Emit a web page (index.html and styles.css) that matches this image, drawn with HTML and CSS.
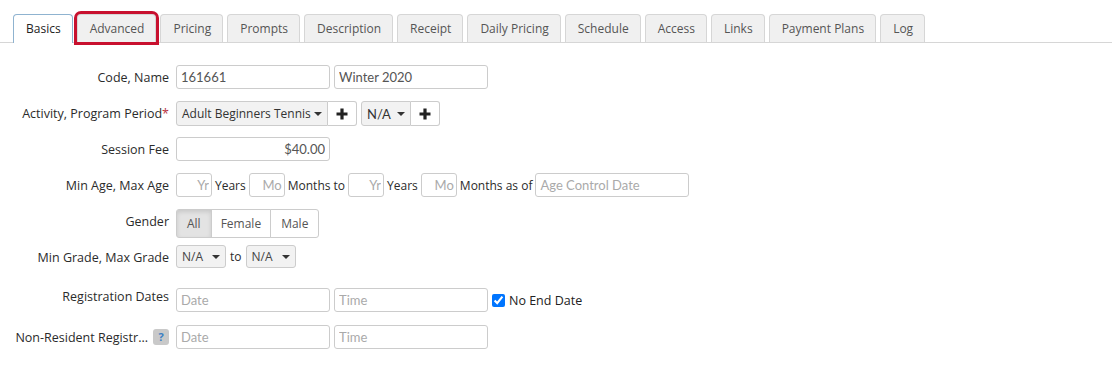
FILE: index.html
```html
<!DOCTYPE html>
<html lang="en">
<head>
    <meta charset="UTF-8">
    <meta name="viewport" content="width=device-width, initial-scale=1.0">
    <title>Session - Basics</title>
    <link rel="stylesheet" href="styles.css">
</head>
<body>
    <div class="tab-container">
        <div class="tab active">Basics</div>
        <div class="tab marked">Advanced</div>
        <div class="tab">Pricing</div>
        <div class="tab">Prompts</div>
        <div class="tab">Description</div>
        <div class="tab">Receipt</div>
        <div class="tab">Daily Pricing</div>
        <div class="tab">Schedule</div>
        <div class="tab">Access</div>
        <div class="tab">Links</div>
        <div class="tab">Payment Plans</div>
        <div class="tab">Log</div>
    </div>

    <div class="form">
        <div class="row">
            <label class="label">Code, Name</label>
            <div class="controls">
                <input type="text" class="field" value="161661">
                <input type="text" class="field" value="Winter 2020">
            </div>
        </div>
        <div class="row">
            <label class="label">Activity, Program Period<span class="req">*</span></label>
            <div class="controls">
                <div class="group">
                    <div class="pick activity">Adult Beginners Tennis <span class="caret"></span></div>
                    <div class="add"><svg width="14" height="14" viewBox="0 0 14 14"><path d="M7 1.5v11M1.5 7h11" stroke="#222" stroke-width="3.2"/></svg></div>
                </div>
                <div class="group">
                    <div class="pick period">N/A <span class="caret"></span></div>
                    <div class="add"><svg width="14" height="14" viewBox="0 0 14 14"><path d="M7 1.5v11M1.5 7h11" stroke="#222" stroke-width="3.2"/></svg></div>
                </div>
            </div>
        </div>
        <div class="row">
            <label class="label">Session Fee</label>
            <div class="controls">
                <input type="text" class="field money" value="$40.00">
            </div>
        </div>
        <div class="row">
            <label class="label">Min Age, Max Age</label>
            <div class="controls tight">
                <input type="text" class="field tiny" placeholder="Yr">
                <span class="word">Years</span>
                <input type="text" class="field tiny" placeholder="Mo">
                <span class="word">Months to</span>
                <input type="text" class="field tiny" placeholder="Yr">
                <span class="word">Years</span>
                <input type="text" class="field tiny" placeholder="Mo">
                <span class="word">Months as of</span>
                <input type="text" class="field" placeholder="Age Control Date">
            </div>
        </div>
        <div class="row">
            <label class="label">Gender</label>
            <div class="controls">
                <div class="btn-group">
                    <div class="btn on">All</div>
                    <div class="btn">Female</div>
                    <div class="btn">Male</div>
                </div>
            </div>
        </div>
        <div class="row">
            <label class="label">Min Grade, Max Grade</label>
            <div class="controls">
                <div class="pick grade">N/A <span class="caret"></span></div>
                <span class="word">to</span>
                <div class="pick grade">N/A <span class="caret"></span></div>
            </div>
        </div>
        <div class="row dates">
            <label class="label top">Registration Dates</label>
            <div class="controls">
                <input type="text" class="field" placeholder="Date">
                <input type="text" class="field" placeholder="Time">
                <label class="check"><input type="checkbox" checked> No End Date</label>
            </div>
        </div>
        <div class="row">
            <label class="label">Non-Resident Registr... <span class="help">?</span></label>
            <div class="controls">
                <input type="text" class="field" placeholder="Date">
                <input type="text" class="field" placeholder="Time">
            </div>
        </div>
    </div>
</body>
</html>
```

FILE: styles.css
```css
body {
    font-family: "Open Sans", Arial, sans-serif;
    font-size: 12px;
    color: #2b2b2b;
    margin: 0;
    background-color: #fff;
}
.tab-container {
    display: flex;
    padding: 14px 0 0 13px;
    margin-right: 4px;
    border-bottom: 1px solid #d6d6d6;
}
.tab {
    height: 27px;
    line-height: 27px;
    padding: 0 11px 0 12px;
    margin-right: 4px;
    margin-bottom: -1px;
    background-color: #f0f0f0;
    border: 1px solid #d6d6d6;
    border-bottom: none;
    border-radius: 4px 4px 0 0;
    color: #555;
    font-size: 12px;
}
.tab.active {
    background-color: #fff;
    border-color: #8fb3d0;
    color: #222;
    height: 28px;
}
.tab.marked {
    outline: 3px solid #c8102e;
    outline-offset: 0;
}
.form {
    margin-top: 22px;
}
.row {
    display: grid;
    grid-template-columns: 169px 1fr;
    column-gap: 7px;
    height: 36px;
    align-items: start;
}
.row.dates {
    margin-top: 7px;
    height: 37px;
}
.label {
    display: flex;
    justify-content: flex-end;
    align-items: center;
    height: 24px;
    white-space: nowrap;
    font-size: 12.5px;
    color: #2b2b2b;
}
.label.top {
    height: 17px;
}
.req {
    color: #b8323f;
}
.help {
    display: inline-block;
    width: 16px;
    height: 16px;
    line-height: 16px;
    margin-left: 5px;
    text-align: center;
    background-color: #c9c9c9;
    border-radius: 3px;
    color: #3b7fc4;
    font-size: 11px;
    font-weight: bold;
}
.controls {
    display: flex;
    align-items: center;
    gap: 4px;
}
.controls.tight {
    gap: 3px;
}
.field {
    box-sizing: border-box;
    width: 154px;
    height: 24px;
    padding: 0 4px;
    border: 1px solid #ccc;
    border-radius: 3px;
    font-family: Lato, "Open Sans", sans-serif;
    font-size: 13px;
    color: #555;
    margin: 0;
}
.field::placeholder {
    color: #aaa;
}
.field.money {
    text-align: right;
}
.field.tiny {
    width: 36px;
    text-align: right;
    padding: 0 2px;
}
.word {
    color: #2b2b2b;
}
.group {
    display: flex;
}
.pick {
    box-sizing: border-box;
    display: flex;
    align-items: center;
    justify-content: space-between;
    height: 25px;
    padding: 0 5px;
    background-color: #f2f2f2;
    border: 1px solid #ccc;
    border-radius: 3px;
    color: #333;
    font-size: 12px;
    white-space: nowrap;
}
.group .pick {
    border-radius: 3px 0 0 3px;
}
.pick.activity {
    width: 152px;
}
.pick.period {
    width: 50px;
    font-family: Lato, "Open Sans", sans-serif;
    font-size: 13px;
}
.pick.grade {
    width: 50px;
    height: 23px;
    color: #444;
}
.caret {
    width: 0;
    height: 0;
    border-left: 4px solid transparent;
    border-right: 4px solid transparent;
    border-top: 4px solid #333;
}
.add {
    box-sizing: border-box;
    display: flex;
    align-items: center;
    justify-content: center;
    width: 29px;
    height: 25px;
    background-color: #fff;
    border: 1px solid #ccc;
    border-left: none;
    border-radius: 0 3px 3px 0;
}
.btn-group {
    display: flex;
}
.btn {
    box-sizing: border-box;
    height: 29px;
    line-height: 27px;
    padding: 0 10px;
    border: 1px solid #ccc;
    margin-left: -1px;
    background-color: #fff;
    color: #555;
}
.btn:first-child {
    margin-left: 0;
    border-radius: 3px 0 0 3px;
}
.btn:nth-child(2) {
    padding: 0 9px;
}
.btn:last-child {
    border-radius: 0 3px 3px 0;
}
.btn.on {
    background-color: #e3e3e3;
    box-shadow: inset 0 2px 4px rgba(0, 0, 0, 0.12);
}
.check {
    display: flex;
    align-items: center;
    gap: 4px;
    font-size: 12.5px;
    color: #222;
}
.check input {
    margin: 0;
    width: 13px;
    height: 13px;
}
```
